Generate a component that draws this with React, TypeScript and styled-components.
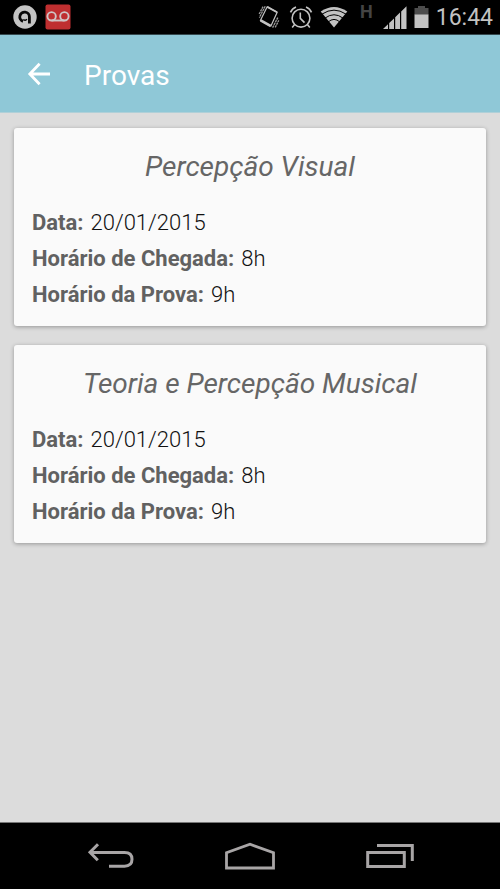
import React from "react";
import styled, { createGlobalStyle } from "styled-components";

const GlobalStyle = createGlobalStyle`
  * { box-sizing: border-box; }
  body {
    margin: 0;
    background: #dcdcdc;
    font-family: Roboto, "Noto Sans", sans-serif;
  }
`;

const Screen = styled.div`
  display: flex;
  flex-direction: column;
  min-height: 100vh;
`;

const StatusBar = styled.div`
  display: flex;
  align-items: center;
  justify-content: space-between;
  height: 35px;
  padding: 0 7px 0 13px;
  background: #000;
  border-bottom: 1px solid #35494e;
`;

const StatusGroup = styled.div<{ $gap: number }>`
  display: flex;
  align-items: center;
  gap: ${(p) => p.$gap}px;

  svg { display: block; }
`;

const NetworkType = styled.span`
  align-self: flex-start;
  margin: 0 3px 0 5px;
  color: #444;
  font-size: 18px;
  font-weight: 700;
  line-height: 24px;
`;

const Clock = styled.time`
  padding-top: 2px;
  color: #c2c2c2;
  font-size: 23px;
  line-height: 32px;
`;

const AppBar = styled.header`
  display: flex;
  align-items: center;
  gap: 24px;
  height: 78px;
  padding: 0 18px;
  background: #8fc8d7;
  border-bottom: 1px solid #b0d0d8;
`;

const BackButton = styled.button`
  display: flex;
  align-items: center;
  justify-content: center;
  width: 42px;
  height: 42px;
  padding: 0;
  border: 0;
  background: none;
`;

const PageTitle = styled.h1`
  margin: 0;
  padding-top: 4px;
  color: #fff;
  font-size: 28px;
  font-weight: 400;
  line-height: 36px;
`;

const ExamList = styled.main`
  flex: 1;
  display: flex;
  flex-direction: column;
  gap: 19px;
  padding: 15px 14px;
`;

const Card = styled.article`
  padding: 18px 18px 13px;
  border-radius: 3px;
  background: #fafafa;
  box-shadow: 0 1px 4px rgba(0, 0, 0, 0.32);
`;

const ExamName = styled.h2`
  margin: 0 0 17px;
  color: #666;
  font-size: 28px;
  font-style: italic;
  font-weight: 400;
  line-height: 42px;
  text-align: center;
`;

const Details = styled.dl`
  margin: 0;
  font-size: 22px;
  line-height: 36px;
`;

const Detail = styled.div`
  display: flex;
  gap: 7px;
`;

const Label = styled.dt`
  color: #616161;
  font-weight: 700;
`;

const Value = styled.dd`
  margin: 0;
  color: #111;
  font-weight: 300;
`;

const NavBar = styled.nav`
  display: flex;
  align-items: center;
  justify-content: center;
  gap: 80px;
  height: 67px;
  background: #000;
  border-top: 1px solid #777;
`;

const NavButton = styled.button`
  display: flex;
  align-items: center;
  justify-content: center;
  width: 60px;
  height: 48px;
  padding: 0;
  border: 0;
  background: none;
`;

const AppIcon = () => (
  <svg width="24" height="24" viewBox="0 0 24 24" aria-hidden="true">
    <circle cx="12" cy="12" r="11.7" fill="#c4c4c4" />
    <path d="M10 16.4A4.8 4.8 0 1 1 16.4 12v6.6" fill="none" stroke="#080808" strokeWidth="2.8" />
    <path d="M10.3 14.6a2.4 2.4 0 0 0 3.6-.4" fill="none" stroke="#080808" strokeWidth="1.4" />
  </svg>
);

const VoicemailIcon = () => (
  <svg width="26" height="26" viewBox="0 0 26 26" aria-hidden="true">
    <rect x=".5" y=".5" width="25" height="25" rx="2" fill="#bf2f30" />
    <g fill="none" stroke="#cfc6c6" strokeWidth="1.9">
      <circle cx="6.6" cy="12.3" r="4.2" />
      <circle cx="19.4" cy="12.3" r="4.2" />
      <path d="M6.6 16.5h12.8" />
    </g>
  </svg>
);

const VibrateIcon = () => (
  <svg width="24" height="24" viewBox="0 0 24 24" fill="none" stroke="#c2c2c2" aria-hidden="true">
    <path d="M9.2 1.7 19.2 7.2 12.8 21.2 2.4 15.4Z" strokeWidth="1.2" strokeLinejoin="round" />
    <path d="M2.7 15.4l9.8 5.5" strokeWidth="2.8" />
    <path d="M9.3 1.9l9.7 5.4" strokeWidth="1.8" />
    <path d="M7.2 1.2 1.4 12.6M5 1.6 1 9.4M14.6 22.6 19.8 12.6M17.2 22.4 20.8 15.4" strokeWidth="1.3" strokeDasharray="2.4 .6" opacity=".8" />
  </svg>
);

const AlarmIcon = () => (
  <svg width="24" height="24" viewBox="0 0 24 24" fill="none" stroke="#c2c2c2" strokeWidth="1.6" aria-hidden="true">
    <circle cx="12" cy="13.2" r="8.9" />
    <path d="M11.3 7.4v6l4.2 4.2" />
    <path d="M1.5 7.4Q3 3.5 7 2M22.5 7.4Q21 3.5 17 2" />
    <path d="M5.6 19.6l-2.4 2.8M18.4 19.6l2.4 2.8" />
  </svg>
);

const WifiIcon = () => (
  <svg width="28" height="22" viewBox="0 0 28 22" aria-hidden="true">
    <path d="M14 21.5.7 5.6Q14-3.5 27.3 5.6Z" fill="#c2c2c2" />
    <g fill="none" stroke="#000" strokeWidth="1">
      <path d="M2 8.1Q14 .2 26 8.1" />
      <path d="M5 12.1Q14 5.4 23 12.1" />
      <path d="M8 16.1Q14 10.7 20 16.1" />
    </g>
  </svg>
);

const SignalIcon = () => (
  <svg width="24" height="23" viewBox="0 0 24 23" fill="#c2c2c2" aria-hidden="true">
    <path d="M0 23 5 18.2V23ZM6.2 17 11 12.4V23H6.2ZM12.2 11.2 17 6.6V23H12.2ZM18.2 5.4 23.5.2V23H18.2Z" />
  </svg>
);

const BatteryIcon = () => (
  <svg width="15" height="22" viewBox="0 0 15 22" aria-hidden="true">
    <path d="M4 0h7v2h3.5v7H.5V2H4Z" fill="#4c4c4c" />
    <path d="M.5 8.5h14V22H.5Z" fill="#c2c2c2" />
  </svg>
);

const ArrowBackIcon = () => (
  <svg width="24" height="24" viewBox="0 0 24 24" fill="none" stroke="#fff" strokeWidth="2.8" aria-hidden="true">
    <path d="M12.6 1.7 2.8 12l9.8 10.3M3 12h20" />
  </svg>
);

const NavBackIcon = () => (
  <svg width="48" height="26" viewBox="0 0 48 26" fill="none" stroke="#a8a5a6" strokeWidth="3" aria-hidden="true">
    <path d="M12 1.2 4 9.2l7.8 8M4 9.5h34.5q7.5 0 7.5 6.8t-7.5 6.9H23" />
  </svg>
);

const NavHomeIcon = () => (
  <svg width="50" height="28" viewBox="0 0 50 28" fill="none" stroke="#a8a5a6" strokeWidth="2.8" aria-hidden="true">
    <path d="M1.5 26V10.8L25 2.2l23.5 8.6V26Z" />
  </svg>
);

const NavRecentIcon = () => (
  <svg width="48" height="26" viewBox="0 0 48 26" fill="none" stroke="#a8a5a6" strokeWidth="3" aria-hidden="true">
    <path d="M1.7 9.5h36.6v14H1.7ZM11 2.5h35.3V18" />
  </svg>
);

const exams = [
  { name: "Percepção Visual", date: "20/01/2015", arrival: "8h", start: "9h" },
  { name: "Teoria e Percepção Musical", date: "20/01/2015", arrival: "8h", start: "9h" },
];

export default function App() {
  return (
    <Screen>
      <GlobalStyle />
      <StatusBar>
        <StatusGroup $gap={8}>
          <AppIcon />
          <VoicemailIcon />
        </StatusGroup>
        <StatusGroup $gap={7}>
          <VibrateIcon />
          <AlarmIcon />
          <WifiIcon />
          <NetworkType>H</NetworkType>
          <SignalIcon />
          <BatteryIcon />
          <Clock>16:44</Clock>
        </StatusGroup>
      </StatusBar>
      <AppBar>
        <BackButton type="button" aria-label="Voltar">
          <ArrowBackIcon />
        </BackButton>
        <PageTitle>Provas</PageTitle>
      </AppBar>
      <ExamList>
        {exams.map((exam) => (
          <Card key={exam.name}>
            <ExamName>{exam.name}</ExamName>
            <Details>
              <Detail>
                <Label>Data:</Label>
                <Value>{exam.date}</Value>
              </Detail>
              <Detail>
                <Label>Horário de Chegada:</Label>
                <Value>{exam.arrival}</Value>
              </Detail>
              <Detail>
                <Label>Horário da Prova:</Label>
                <Value>{exam.start}</Value>
              </Detail>
            </Details>
          </Card>
        ))}
      </ExamList>
      <NavBar>
        <NavButton type="button" aria-label="Voltar"><NavBackIcon /></NavButton>
        <NavButton type="button" aria-label="Início"><NavHomeIcon /></NavButton>
        <NavButton type="button" aria-label="Recentes"><NavRecentIcon /></NavButton>
      </NavBar>
    </Screen>
  );
}
